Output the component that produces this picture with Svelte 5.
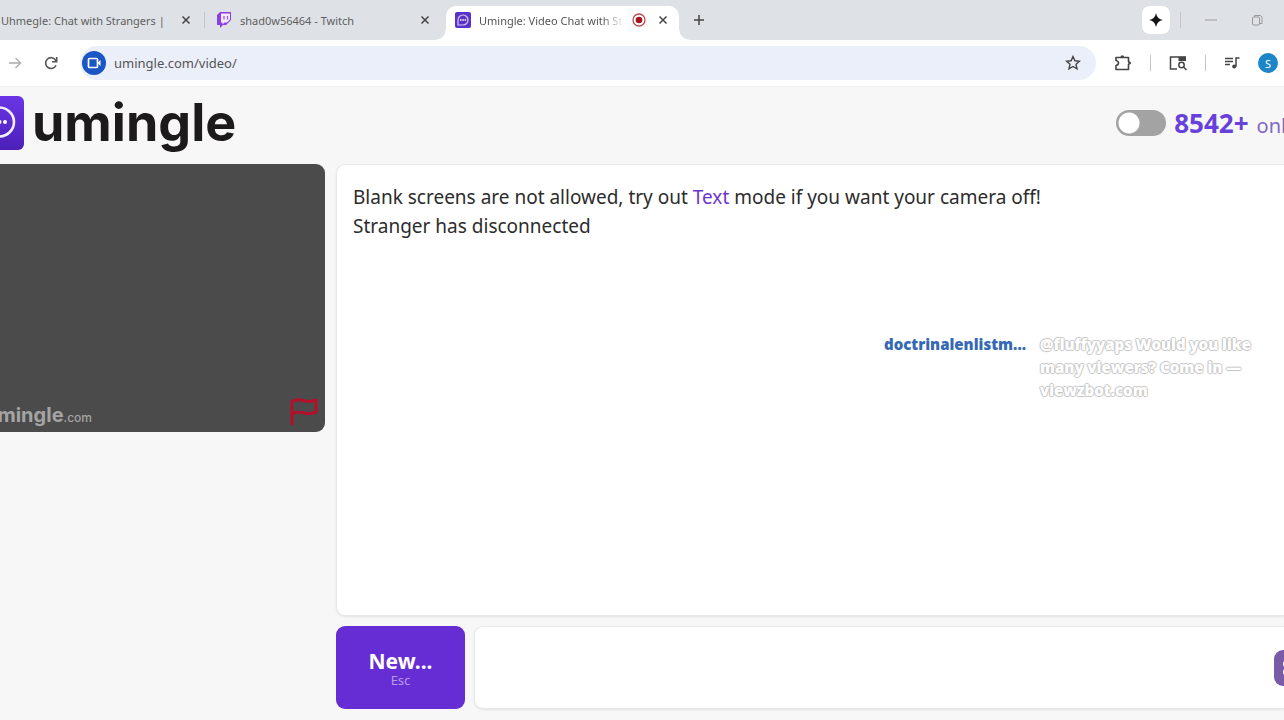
<script lang="ts">
  interface Tab {
    title: string;
    kind: 'plain' | 'twitch' | 'umingle';
    active?: boolean;
  }

  const tabs: Tab[] = [
    { title: 'Uhmegle: Chat with Strangers |', kind: 'plain' },
    { title: 'shad0w56464 - Twitch', kind: 'twitch' },
    { title: 'Umingle: Video Chat with Strangers', kind: 'umingle', active: true },
  ];

  let address = $state('umingle.com/video/');
  let message = $state('');
  let textMode = $state(false);
  const onlineCount = 8542;
</script>

<div class="window">
  <div class="tab-strip">
    {#each tabs as tab}
      <div class="tab {tab.kind}" class:active={tab.active}>
        {#if tab.kind === 'twitch'}
          <svg width="16" height="17" viewBox="0 0 16 17">
            <path d="M4 0 1 3v10h3v3l3-3h3l5-5V0z" fill="#8b3fe0" />
            <path d="M5 1.500h9v6l-3 3H8.500L6.500 12.500v-2H5z" fill="#f3eaff" />
            <path d="M8 4v3.500M11.500 4v3.500" stroke="#9a5be8" stroke-width="1.300" />
          </svg>
        {:else if tab.kind === 'umingle'}
          <svg width="16" height="16" viewBox="0 0 16 16">
            <rect width="16" height="16" rx="2" fill="#5a32c8" />
            <path d="M3 13V8a5 5 0 1 1 5 5z" fill="none" stroke="#d9c8ff" stroke-width="1.200" />
            <path d="M5 8h1.500M7.300 8h1.500M9.600 8h1.500" stroke="#fff" stroke-width="1.400" />
          </svg>
        {/if}
        <span class="tab-title">{tab.title}</span>
        {#if tab.active}
          <svg class="recording" width="14" height="14" viewBox="0 0 14 14">
            <circle cx="7" cy="7" r="6" fill="#fff" stroke="#bd4a50" stroke-width="1.300" />
            <circle cx="7" cy="7" r="3.300" fill="#a3151d" />
          </svg>
        {/if}
        <button class="icon-button" aria-label="Close tab">
          <svg width="10" height="10" viewBox="0 0 10 10">
            <path d="m1.500 1.500 7 7m0-7-7 7" stroke="#444" stroke-width="1.500" />
          </svg>
        </button>
      </div>
    {/each}
    <button class="icon-button new-tab" aria-label="New tab">
      <svg width="12" height="12" viewBox="0 0 12 12">
        <path d="M6 1v10M1 6h10" stroke="#444" stroke-width="1.500" />
      </svg>
    </button>
    <div class="window-controls">
      <button class="spark" aria-label="Assistant">
        <svg width="14" height="14" viewBox="0 0 14 14">
          <path d="M7 0q1 6 7 7-6 1-7 7-1-6-7-7 6-1 7-7z" fill="#151515" />
        </svg>
      </button>
      <span class="divider"></span>
      <button class="icon-button minimize" aria-label="Minimize">
        <svg width="12" height="12" viewBox="0 0 12 12"><path d="M0 6h12" stroke="#999" /></svg>
      </button>
      <button class="icon-button" aria-label="Restore">
        <svg width="12" height="12" viewBox="0 0 12 12" fill="none" stroke="#999">
          <rect x="1.500" y="3" width="7" height="8" rx="1" />
          <path d="M3.500 3V1.500h6l1.500 1.500v6.500H8.500" />
        </svg>
      </button>
    </div>
  </div>

  <div class="toolbar">
    <button class="icon-button" aria-label="Forward">
      <svg width="14" height="14" viewBox="0 0 14 14" fill="none" stroke="#aaa" stroke-width="1.300">
        <path d="M1 7h11M7.500 2l5 5-5 5" />
      </svg>
    </button>
    <button class="icon-button" aria-label="Reload">
      <svg width="14" height="14" viewBox="0 0 14 14" fill="none" stroke="#555" stroke-width="1.600">
        <path d="M12 9.200A5.400 5.400 0 1 1 11.500 4L12.500 5.500" />
        <path d="M12.700 1v4.700H8" />
      </svg>
    </button>
    <div class="omnibox">
      <svg width="24" height="24" viewBox="0 0 24 24">
        <circle cx="12" cy="12" r="12" fill="#1a56c4" />
        <rect x="6.500" y="7.500" width="9" height="9" rx="1" fill="none" stroke="#fff" stroke-width="1.700" />
        <path d="m15.500 12 3-3v6z" fill="#fff" />
      </svg>
      <input class="address" aria-label="Address" bind:value={address} spellcheck="false" />
      <button class="icon-button" aria-label="Bookmark">
        <svg width="16" height="16" viewBox="0 0 16 16" fill="none" stroke="#444" stroke-width="1.400">
          <path d="m8 1.500 1.900 4.300 4.600.4-3.500 3.100 1 4.600L8 11.500l-4 2.400 1-4.600L1.500 6.200l4.600-.4z" />
        </svg>
      </button>
    </div>
    <div class="actions">
      <button class="icon-button" aria-label="Extensions">
        <svg width="18" height="18" viewBox="0 0 18 18">
          <path d="M2 3.500h12.500v4.200l1.800 1.300-1.800 1.300v5.200H2v-4q2.500-.5 2.500-2.500T2 6.500z" fill="none" stroke="#444" stroke-width="1.600" stroke-linejoin="round" />
          <path d="M6.500 3a1.800 1.800 0 0 1 3.600 0M14.500 7.300a1.800 1.800 0 0 1 0 3.500" fill="#444" />
        </svg>
      </button>
      <span class="divider"></span>
      <button class="icon-button" aria-label="Search side panel">
        <svg width="18" height="16" viewBox="0 0 18 16" fill="none" stroke="#444" stroke-width="1.500">
          <path d="M8 14H1.500V2H10" />
          <path d="M9.500 1.200H17V6H9.500z" fill="#444" stroke="none" />
          <circle cx="12.500" cy="10" r="2.700" />
          <path d="m14.500 12 3 3" />
        </svg>
      </button>
      <span class="divider"></span>
      <button class="icon-button" aria-label="Media controls">
        <svg width="16" height="14" viewBox="0 0 16 14" fill="none" stroke="#444" stroke-width="1.500">
          <path d="M1 2.500h8M1 5.500h8M1 8.500h5M12 10.500V2h3.500" />
          <circle cx="10.200" cy="10.500" r="2" fill="#444" stroke="none" />
        </svg>
      </button>
      <button class="profile" aria-label="Profile">S</button>
    </div>
  </div>

  <main>
    <header>
      <a class="brand" href="/">
        <svg width="54" height="54" viewBox="0 0 54 54">
          <defs>
            <linearGradient id="brand-fill" x1="0" y1="0" x2="0" y2="1">
              <stop offset="0" stop-color="#6b35e6" />
              <stop offset="1" stop-color="#4b20b8" />
            </linearGradient>
          </defs>
          <rect width="54" height="54" rx="6" fill="url(#brand-fill)" />
          <path d="M14 41V26a15 14.500 0 1 1 15 14.500z" fill="none" stroke="#f3edff" stroke-width="2.600" />
          <circle cx="24" cy="26" r="2" fill="#fff" />
          <circle cx="29.500" cy="26" r="2" fill="#fff" />
          <circle cx="35" cy="26" r="2" fill="#fff" />
        </svg>
        <span>umingle</span>
      </a>
      <div class="status">
        <label class="switch">
          <input type="checkbox" role="switch" aria-label="Text mode" bind:checked={textMode} />
        </label>
        <span class="count">{onlineCount}+</span>
        <span class="online">online</span>
      </div>
    </header>

    <div class="content">
      <section class="videos">
        <div class="video">
          <div class="watermark">umingle<small>.com</small></div>
          <button class="icon-button" aria-label="Report">
            <svg width="30" height="28" viewBox="0 0 30 28" fill="none" stroke="#b3102c" stroke-width="3" stroke-linejoin="round">
              <path d="M3 27V3.500Q8 .5 14 2.500t13-.5v12q-6 2.500-12 1t-12 .5" />
            </svg>
          </button>
        </div>
      </section>

      <section class="chat">
        <div class="log">
          <p>Blank screens are not allowed, try out <a href="/text">Text</a> mode if you want your camera off!</p>
          <p>Stranger has disconnected</p>
          <div class="overlay-message">
            <strong>doctrinalenlistm...</strong>
            <span>@fluffyyaps Would you like many viewers? Come in — viewzbot.com</span>
          </div>
        </div>
        <div class="composer">
          <button class="new-button">
            <b>New...</b>
            <span>Esc</span>
          </button>
          <div class="message-box">
            <input aria-label="Message" bind:value={message} />
            <button class="send" aria-label="Send">
              <svg width="20" height="20" viewBox="0 0 20 20" fill="none" stroke="#fff" stroke-width="2">
                <circle cx="6" cy="6" r="4" />
                <circle cx="6" cy="14" r="4" />
                <path d="M10 6h8M10 14h8" />
              </svg>
            </button>
          </div>
        </div>
      </section>
    </div>
  </main>
</div>

<style>
  :global(body) {
    background: #f7f7f7;
    font-family: 'Noto Sans', 'Open Sans', sans-serif;
  }

  .window {
    display: flex;
    flex-direction: column;
    min-height: 100vh;
    overflow: hidden;
  }

  button,
  input {
    border: none;
    font-family: inherit;
  }

  .icon-button {
    display: flex;
    padding: 0;
    background: none;
    cursor: pointer;
  }

  .divider {
    width: 1px;
    height: 16px;
    background: #c4c7ca;
  }

  .tab-strip {
    display: flex;
    height: 40px;
    background: #dee2e6;
  }

  .tab {
    display: flex;
    align-items: center;
    box-sizing: border-box;
    gap: 8px;
    color: #606060;
    font-size: 11px;
  }

  .tab.plain {
    width: 205px;
    padding: 0 14px 0 1px;
    background: linear-gradient(#c4c7ca, #c4c7ca) right center / 1px 16px no-repeat;
  }

  .tab.twitch {
    width: 241px;
    padding: 0 16px 0 11px;
  }

  .tab.active {
    position: relative;
    width: 233px;
    margin-top: 6px;
    padding: 0 11px 6px 9px;
    border-radius: 10px 10px 0 0;
    background: #fff;
    color: #555;
  }

  /* flared feet where the active tab meets the toolbar */
  .tab.active::before,
  .tab.active::after {
    content: '';
    position: absolute;
    bottom: 0;
    width: 10px;
    height: 10px;
  }

  .tab.active::before {
    right: 100%;
    background: radial-gradient(circle at 0 0, transparent 9px, #fff 10px);
  }

  .tab.active::after {
    left: 100%;
    background: radial-gradient(circle at 100% 0, transparent 9px, #fff 10px);
  }

  .tab-title {
    flex: 1;
    overflow: hidden;
    white-space: nowrap;
  }

  .active .tab-title {
    mask-image: linear-gradient(90deg, #000 85%, transparent);
  }

  .recording {
    flex-shrink: 0;
    margin-right: 4px;
  }

  .new-tab {
    align-items: center;
    margin-left: 14px;
  }

  .window-controls {
    display: flex;
    align-items: center;
    margin-left: auto;
    padding-right: 21px;
    gap: 10px;
  }

  .spark {
    display: flex;
    align-items: center;
    justify-content: center;
    width: 28px;
    height: 28px;
    padding: 0;
    border-radius: 8px;
    background: #fff;
  }

  .minimize {
    margin: 0 24px 0 14px;
  }

  .toolbar {
    display: flex;
    align-items: center;
    height: 46px;
    padding: 0 6px 0 8px;
    gap: 22px;
    border-bottom: 1px solid #f0f0f0;
    background: #fff;
  }

  .omnibox {
    display: flex;
    align-items: center;
    flex: 1;
    height: 34px;
    padding: 0 15px 0 2px;
    gap: 8px;
    border-radius: 17px;
    background: #ebeffa;
  }

  .address {
    flex: 1;
    padding: 0;
    background: none;
    color: #555;
    font-size: 13px;
    outline: none;
  }

  .actions {
    display: flex;
    align-items: center;
    margin-left: -4px;
    gap: 18px;
  }

  .profile {
    width: 20px;
    height: 20px;
    padding: 0;
    border-radius: 50%;
    background: #1c86c8;
    color: #fff;
    font-size: 11px;
  }

  main {
    display: flex;
    flex: 1;
    flex-direction: column;
    padding-bottom: 11px;
  }

  header {
    display: flex;
    align-items: center;
    justify-content: space-between;
    box-sizing: border-box;
    height: 77px;
    padding-bottom: 6px;
  }

  .brand {
    display: flex;
    align-items: center;
    margin-left: -30px;
    gap: 8px;
    color: #1c1a1a;
    font-family: Inter, sans-serif;
    font-size: 52px;
    font-weight: 700;
    line-height: 54px;
    text-decoration: none;
  }

  .status {
    display: flex;
    align-items: baseline;
    margin-right: -31px;
    gap: 8px;
    color: #6741d9;
  }

  .switch {
    align-self: center;
    display: flex;
  }

  .switch input {
    width: 50px;
    height: 26px;
    margin: 0;
    border: 2px solid #a3a3a3;
    border-radius: 13px;
    appearance: none;
    background: radial-gradient(circle at 11px 11px, #fff 10px, #a3a3a3 11px);
  }

  .switch input:checked {
    background: radial-gradient(circle at 35px 11px, #fff 10px, #6741d9 11px);
  }

  .count {
    font-size: 26px;
    font-weight: 700;
  }

  .online {
    color: #8069c4;
    font-size: 20px;
  }

  .content {
    display: flex;
    flex: 1;
    gap: 11px;
  }

  .videos {
    flex: 0 0 325px;
  }

  .video {
    display: flex;
    align-items: flex-end;
    justify-content: space-between;
    box-sizing: border-box;
    height: 268px;
    padding: 0 6px 6px 0;
    border-radius: 0 9px 9px 0;
    background: #4b4b4b;
  }

  .watermark {
    margin-left: -15px;
    color: #a4a4a4;
    font-family: Inter, sans-serif;
    font-size: 20px;
    font-weight: 700;
    line-height: 16px;
  }

  .watermark small {
    font-size: 12px;
    font-weight: 500;
  }

  .chat {
    display: flex;
    flex: 1;
    flex-direction: column;
    gap: 10px;
  }

  .log {
    position: relative;
    flex: 1;
    padding: 18px 16px;
    border: 1px solid #e8e8e8;
    border-right: none;
    border-radius: 9px 0 0 9px;
    background: #fff;
    box-shadow: 0 1px 2px #e4e4e4;
    color: #2c2c2c;
    font-size: 19px;
    line-height: 29px;
  }

  .log p {
    margin: 0;
  }

  .log a {
    color: #6d35d0;
    text-decoration: none;
  }

  .overlay-message {
    position: absolute;
    top: 168px;
    right: 14px;
    display: flex;
    width: 386px;
    gap: 12px;
    font-family: 'Open Sans', sans-serif;
    font-size: 15px;
    font-weight: 800;
    line-height: 23px;
  }

  .overlay-message strong {
    flex: 0 0 144px;
    color: #3569b4;
    font-weight: 800;
  }

  .overlay-message span {
    color: #fff;
    text-shadow:
      1px 0 1px #c4c4c4,
      -1px 0 1px #c4c4c4,
      0 1px 1px #c4c4c4,
      0 -1px 1px #c4c4c4;
  }

  .composer {
    display: flex;
    gap: 9px;
  }

  .new-button {
    display: flex;
    flex-direction: column;
    align-items: center;
    justify-content: center;
    width: 129px;
    height: 83px;
    padding: 4px 0 0;
    border-radius: 9px;
    background: #672dd5;
    color: #fff;
    cursor: pointer;
  }

  .new-button b {
    font-size: 21px;
    line-height: 22px;
  }

  .new-button span {
    color: #b99aed;
    font-size: 13px;
    line-height: 17px;
  }

  .message-box {
    display: flex;
    align-items: center;
    box-sizing: border-box;
    flex: 1;
    border: 1px solid #e8e8e8;
    border-right: none;
    border-radius: 9px 0 0 9px;
    background: #fff;
    box-shadow: 0 1px 2px #e4e4e4;
  }

  .message-box input {
    flex: 1;
    min-width: 0;
    height: 60px;
    padding: 0 16px;
    background: none;
    font-size: 19px;
    outline: none;
  }

  .send {
    display: flex;
    align-items: center;
    justify-content: center;
    width: 36px;
    height: 36px;
    margin-right: -26px;
    padding: 0;
    border-radius: 9px;
    background: #7a5ba8;
  }
</style>
